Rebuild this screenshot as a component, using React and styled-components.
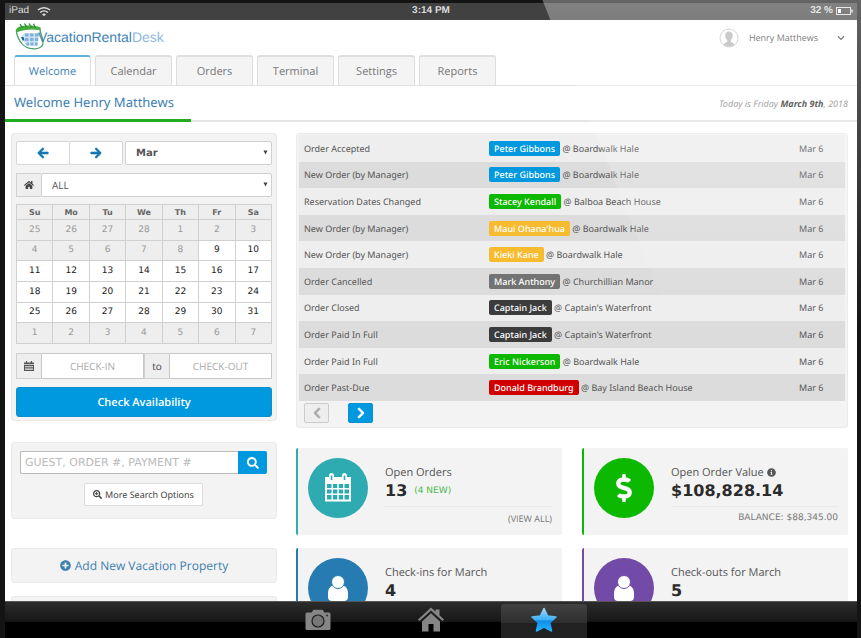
import React from "react";
import styled, { createGlobalStyle } from "styled-components";
import {
  FaArrowLeft,
  FaArrowRight,
  FaChevronDown,
  FaChevronLeft,
  FaChevronRight,
  FaDollarSign,
  FaHome,
  FaInfoCircle,
  FaPlusCircle,
  FaSearch,
  FaSearchPlus,
} from "react-icons/fa";

const tabs = ["Welcome", "Calendar", "Orders", "Terminal", "Settings", "Reports"];

const weekdays = ["Su", "Mo", "Tu", "We", "Th", "Fr", "Sa"];

const weeks = [
  [25, 26, 27, 28, 1, 2, 3],
  [4, 5, 6, 7, 8, 9, 10],
  [11, 12, 13, 14, 15, 16, 17],
  [18, 19, 20, 21, 22, 23, 24],
  [25, 26, 27, 28, 29, 30, 31],
  [1, 2, 3, 4, 5, 6, 7],
];

const blue = "#0099e0";
const green = "#0db800";

const activity = [
  { event: "Order Accepted", guest: "Peter Gibbons", color: blue, place: "Boardwalk Hale" },
  { event: "New Order (by Manager)", guest: "Peter Gibbons", color: blue, place: "Boardwalk Hale" },
  { event: "Reservation Dates Changed", guest: "Stacey Kendall", color: green, place: "Balboa Beach House" },
  { event: "New Order (by Manager)", guest: "Maui Ohana'hua", color: "#f6bb2e", place: "Boardwalk Hale" },
  { event: "New Order (by Manager)", guest: "Kieki Kane", color: "#f6bb2e", place: "Boardwalk Hale" },
  { event: "Order Cancelled", guest: "Mark Anthony", color: "#737373", place: "Churchillian Manor" },
  { event: "Order Closed", guest: "Captain Jack", color: "#3c3c3c", place: "Captain's Waterfront" },
  { event: "Order Paid In Full", guest: "Captain Jack", color: "#3c3c3c", place: "Captain's Waterfront" },
  { event: "Order Paid In Full", guest: "Eric Nickerson", color: green, place: "Boardwalk Hale" },
  { event: "Order Past-Due", guest: "Donald Brandburg", color: "#d00000", place: "Bay Island Beach House" },
];

// today is the 9th, so everything before it is closed
function isOpen(week, day) {
  if (week === 0 || week === 5) return false;
  return week > 1 || day >= 9;
}

export default function App() {
  return (
    <>
      <GlobalStyle />
      <Device>
        <StatusBar />
        <Screen>
          <Header />
          <TitleBar>
            <Title>Welcome Henry Matthews</Title>
            <Today>
              Today is Friday <b>March 9th</b>, 2018
            </Today>
          </TitleBar>
          <Content>
            <Sidebar>
              <Availability />
              <SearchPanel />
              <AddPanel>
                <AddLink href="#add">
                  <FaPlusCircle size={11} /> Add New Vacation Property
                </AddLink>
              </AddPanel>
              <Panel />
            </Sidebar>
            <Main>
              <Activity />
              <Cards />
            </Main>
          </Content>
        </Screen>
        <Dock />
        <Glare />
      </Device>
    </>
  );
}

function StatusBar() {
  return (
    <Status>
      <StatusSide>
        iPad
        <svg width="14" height="11" viewBox="0 0 14 11" fill="none" stroke="#ddd" strokeWidth="1.6">
          <path d="M1 4C4.400.9 9.600.9 13 4" />
          <path d="M3.200 6.500C5.400 4.500 8.600 4.500 10.800 6.500" />
          <path d="M5 8.200C6.200 7.200 7.800 7.200 9 8.200L7 10.300Z" fill="#ddd" stroke="none" />
        </svg>
      </StatusSide>
      <Clock>3:14 PM</Clock>
      <StatusSide $end>
        32 %
        <svg width="17" height="8" viewBox="0 0 17 8" fill="none" stroke="#ddd">
          <rect x=".5" y=".5" width="14" height="7" />
          <rect x="2" y="2" width="3" height="4" fill="#fff" stroke="none" />
          <path d="M16 2.500V5.500" strokeWidth="1.500" />
        </svg>
      </StatusSide>
    </Status>
  );
}

function Logo() {
  return (
    <LogoLink href="#home">
      <svg width="30" height="28" viewBox="0 0 30 28">
        <path
          d="M1.500 7C8 5 19 5 25 6C24.500 10 28.500 14 28 20C27.600 24 25 25.500 20 25.800C14 26 8.500 23.500 5.500 19C3 15 1.200 12 1.500 7Z"
          fill="#fff"
          stroke="#46a36a"
          strokeWidth="1.300"
        />
        <path d="M1 9.500C.5 5.500 3 3.500 7 3C13 2.200 20 2.500 25.500 4.500L25.500 7C17 5.800 8 6.500 1 9.500Z" fill="#43ac3c" />
        <path d="M5 1L7.500 5M9.500 .5L12 4.500M14 .5L16.500 4.500M18.500 .8L20.500 4.800" stroke="#2c8a35" strokeWidth="1.300" />
        <path d="M6.500 13L9.500 10H25L22 23.500L11 22.500Z" fill="#cfe2f2" />
        <path
          d="M10 10.500H13.500V13.500H10ZM15 10.500H18.500V13.500H15ZM20 10.500H23.500V13.500H20ZM10 15H13.500V18H10ZM15 15H18.500V18H15ZM20 15H23V18H20ZM11.500 19.500H14V22.500H11.500ZM15.500 19.500H18.500V22.500H15.500ZM20 19.500H22.500V22.500H20Z"
          fill="#7fb0dc"
        />
        <path d="M6 14H8.500L9.500 17.500H7.500Z" fill="#1f5f9e" />
      </svg>
      <LogoText>
        VacationRental<span>Desk</span>
      </LogoText>
    </LogoLink>
  );
}

function Header() {
  return (
    <TopBar>
      <Brand>
        <Logo />
        <UserMenu type="button">
          <svg width="20" height="20" viewBox="0 0 20 20">
            <circle cx="10" cy="10" r="9" fill="#fff" stroke="#c4c4c4" />
            <path
              d="M10 3.500C12.300 3.500 13.800 5.200 13.800 7.600C13.800 9.700 12.800 11.300 11.800 12V14C13.200 14.800 15 15.200 15.600 16.500A8.500 8.500 0 0 1 4.400 16.500C5 15.200 6.800 14.800 8.200 14V12C7.200 11.300 6.200 9.700 6.200 7.600C6.200 5.200 7.700 3.500 10 3.500Z"
              fill="#b4b4b4"
            />
          </svg>
          <UserName>Henry Matthews</UserName>
          <FaChevronDown size={8} />
        </UserMenu>
      </Brand>
      <Tabs>
        {tabs.map((tab, i) => (
          <Tab key={tab} href={`#${tab}`} $active={i === 0}>
            {tab}
          </Tab>
        ))}
      </Tabs>
    </TopBar>
  );
}

function Availability() {
  return (
    <Panel>
      <ControlRow>
        <ArrowGroup>
          <ArrowButton type="button" aria-label="Previous month">
            <FaArrowLeft size={12} />
          </ArrowButton>
          <ArrowButton type="button" aria-label="Next month">
            <FaArrowRight size={12} />
          </ArrowButton>
        </ArrowGroup>
        <SelectBox>
          <Select aria-label="Month" $bold>
            <option>Mar</option>
          </Select>
          <Caret />
        </SelectBox>
      </ControlRow>
      <InputGroup>
        <Addon htmlFor="property">
          <FaHome size={10} />
        </Addon>
        <SelectBox>
          <Select id="property" aria-label="Property">
            <option>ALL</option>
          </Select>
          <Caret />
        </SelectBox>
      </InputGroup>
      <Calendar>
        <thead>
          <tr>
            {weekdays.map((day) => (
              <th key={day}>{day}</th>
            ))}
          </tr>
        </thead>
        <tbody>
          {weeks.map((week, i) => (
            <tr key={i}>
              {week.map((day) => (
                <Day key={day} $open={isOpen(i, day)}>
                  {day}
                </Day>
              ))}
            </tr>
          ))}
        </tbody>
      </Calendar>
      <InputGroup>
        <Addon htmlFor="checkin">
          <svg width="10" height="10" viewBox="0 0 10 10" fill="#555">
            <path d="M0 1.500H2V0H3.200V1.500H6.800V0H8V1.500H10V3H0ZM0 3.800H10V10H0ZM1 5V5.800H9V5ZM1 6.700V7.500H9V6.700ZM1 8.300V9.100H9V8.300Z" fillRule="evenodd" />
          </svg>
        </Addon>
        <DateInput id="checkin" aria-label="Check-in" placeholder="CHECK-IN" />
        <Addon htmlFor="checkout">to</Addon>
        <DateInput id="checkout" placeholder="CHECK-OUT" />
      </InputGroup>
      <CheckButton type="button">Check Availability</CheckButton>
    </Panel>
  );
}

function Caret() {
  return (
    <CaretIcon width="5" height="5" viewBox="0 0 5 5">
      <path d="M.5 .5H4.500L2.500 4.500Z" fill="#444" />
    </CaretIcon>
  );
}

function SearchPanel() {
  return (
    <SearchBox>
      <SearchRow>
        <SearchInput aria-label="Search" placeholder="GUEST, ORDER #, PAYMENT #" />
        <SearchButton type="button" aria-label="Search">
          <FaSearch size={12} />
        </SearchButton>
      </SearchRow>
      <MoreButton type="button">
        <FaSearchPlus size={9} /> More Search Options
      </MoreButton>
    </SearchBox>
  );
}

function Activity() {
  return (
    <ActivityPanel>
      <ActivityTable>
        <tbody>
          {activity.map((row, i) => (
            <tr key={i}>
              <EventCell>{row.event}</EventCell>
              <td>
                <Badge $color={row.color}>{row.guest}</Badge> @ {row.place}
              </td>
              <DateCell>Mar 6</DateCell>
            </tr>
          ))}
        </tbody>
      </ActivityTable>
      <Pager>
        <PageButton type="button" aria-label="Previous page" disabled>
          <FaChevronLeft size={12} />
        </PageButton>
        <PageButton type="button" aria-label="Next page">
          <FaChevronRight size={12} />
        </PageButton>
      </Pager>
    </ActivityPanel>
  );
}

function CalendarIcon() {
  return (
    <svg width="28" height="30" viewBox="0 0 28 30">
      <path
        d="M1 4H5V2.500a2.500 2.500 0 0 1 5 0V4H18V2.500a2.500 2.500 0 0 1 5 0V4H27V28.500H1Z"
        fill="#fff"
      />
      <path d="M6.700 2.500H8.300V7H6.700ZM19.700 2.500H21.300V7H19.700Z" fill="#2dabb1" />
      <path
        d="M3 11H7.500V15H3ZM9 11H13.300V15H9ZM14.800 11H19V15H14.800ZM20.500 11H25V15H20.500ZM3 16.500H7.500V20.500H3ZM9 16.500H13.300V20.500H9ZM14.800 16.500H19V20.500H14.800ZM20.500 16.500H25V20.500H20.500ZM3 22H7.500V26.500H3ZM9 22H13.300V26.500H9ZM14.800 22H19V26.500H14.800ZM20.500 22H25V26.500H20.500Z"
        fill="#2dabb1"
      />
    </svg>
  );
}

function PersonIcon({ line }) {
  return (
    <svg width="22" height="26" viewBox="0 0 22 26" fill="#fff">
      <path d="M6 10.500H16C19.500 11.500 21 14.500 21 19V22C21 24.500 19.500 26 17 26H5C2.500 26 1 24.500 1 22V19C1 14.500 2.500 11.500 6 10.500Z" />
      <circle cx="11" cy="7" r="6.500" stroke={line} strokeWidth="1" />
    </svg>
  );
}

function Cards() {
  return (
    <CardGrid>
      <Card $color="#2dabb1">
        <Circle $color="#2dabb1">
          <CalendarIcon />
        </Circle>
        <CardBody>
          <CardLabel>Open Orders</CardLabel>
          <CardValue>
            13 <New>(4 NEW)</New>
          </CardValue>
          <CardFoot>
            <a href="#orders">(VIEW ALL)</a>
          </CardFoot>
        </CardBody>
      </Card>
      <Card $color="#0db800">
        <Circle $color="#0db800">
          <FaDollarSign size={28} />
        </Circle>
        <CardBody>
          <CardLabel>
            Open Order Value <FaInfoCircle size={9} />
          </CardLabel>
          <CardValue>$108,828.14</CardValue>
          <CardFoot $wide>BALANCE: $88,345.00</CardFoot>
        </CardBody>
      </Card>
      <Card $color="#267cb2">
        <Circle $color="#267cb2">
          <PersonIcon line="#267cb2" />
        </Circle>
        <CardBody>
          <CardLabel>Check-ins for March</CardLabel>
          <CardValue>4</CardValue>
          <CardFoot />
        </CardBody>
      </Card>
      <Card $color="#724aa8">
        <Circle $color="#724aa8">
          <PersonIcon line="#724aa8" />
        </Circle>
        <CardBody>
          <CardLabel>Check-outs for March</CardLabel>
          <CardValue>5</CardValue>
          <CardFoot />
        </CardBody>
      </Card>
    </CardGrid>
  );
}

function Dock() {
  return (
    <DockBar>
      <DockButton type="button" aria-label="Camera">
        <svg width="26" height="22" viewBox="0 0 26 22">
          <path
            d="M2 3.500H6.500L8.500 .8H17.500L19.500 3.500H24A1.500 1.500 0 0 1 25.500 5V19.500A1.500 1.500 0 0 1 24 21H2A1.500 1.500 0 0 1 .5 19.500V5A1.500 1.500 0 0 1 2 3.500Z"
            fill="#858585"
          />
          <circle cx="13" cy="12" r="6" fill="#777" stroke="#1c1c1c" strokeWidth="1.200" />
          <circle cx="22" cy="6.500" r="1" fill="#333" />
        </svg>
      </DockButton>
      <DockButton type="button" aria-label="Home">
        <svg width="26" height="26" viewBox="0 0 26 26" fill="#858585">
          <path d="M0 12.500L13 .5L17.500 4.600V2.500H21.500V8.200L26 12.500L24.500 14L13 3.600L1.500 14Z" />
          <path d="M4 14.500L13 6.200L22 14.500V24.500H15.500V17H10.500V24.500H4Z" />
        </svg>
      </DockButton>
      <DockButton type="button" aria-label="Favorites" $active>
        <svg width="28" height="26" viewBox="0 0 28 26">
          <defs>
            <linearGradient id="star" x1="0" y1="0" x2="0" y2="1">
              <stop offset="0" stopColor="#9ad8fb" />
              <stop offset=".5" stopColor="#3fb0f5" />
              <stop offset=".55" stopColor="#0f8eea" />
              <stop offset="1" stopColor="#24b4ff" />
            </linearGradient>
          </defs>
          <path
            d="M14 1.500L17.700 9L26 10L19.800 15.800L21.500 24L14 20L6.500 24L8.200 15.800L2 10L10.300 9Z"
            fill="url(#star)"
            stroke="url(#star)"
            strokeWidth="1.500"
            strokeLinejoin="round"
          />
        </svg>
      </DockButton>
    </DockBar>
  );
}

const GlobalStyle = createGlobalStyle`
  * {
    box-sizing: border-box;
  }

  body {
    margin: 0;
    background: #000;
    font-family: "Open Sans", sans-serif;
    font-size: 10px;
    color: #555;
    text-rendering: geometricPrecision;
  }

  button, input, select {
    margin: 0;
    font-family: inherit;
    border-radius: 0;
    text-rendering: inherit;
  }

  a {
    color: inherit;
    text-decoration: none;
  }

  svg {
    flex-shrink: 0;
  }
`;

const Device = styled.div`
  position: relative;
  display: flex;
  flex-direction: column;
  height: 100vh;
  padding: 3px 4px 0 5px;
  background: #141414;
  overflow: hidden;
`;

/* light falling over the glass from the top right */
const Glare = styled.div`
  position: absolute;
  top: 0;
  right: 0;
  bottom: 0;
  left: 63%;
  background: linear-gradient(to bottom, rgba(255, 255, 255, 0.34), rgba(255, 255, 255, 0) 52%);
  clip-path: polygon(0 0, 100% 0, 100% 100%, 80% 100%);
  pointer-events: none;
`;

const Status = styled.div`
  display: grid;
  grid-template-columns: 1fr auto 1fr;
  align-items: center;
  height: 17px;
  padding: 0 4px 1px;
  background: #414141;
  color: #ddd;
  font-family: "Liberation Sans", Arial, sans-serif;
  font-size: 10px;
  line-height: 14px;
`;

const StatusSide = styled.div`
  display: flex;
  align-items: center;
  justify-content: ${(props) => (props.$end ? "flex-end" : "flex-start")};
  gap: ${(props) => (props.$end ? "3px" : "8px")};
  font-weight: ${(props) => (props.$end ? "bold" : "normal")};
`;

const Clock = styled.div`
  font-weight: bold;
`;

const Screen = styled.div`
  flex: 1;
  min-height: 0;
  overflow: hidden;
  background: #fff;
`;

const TopBar = styled.header`
  border-bottom: 1px solid #e2e2e2;
`;

const Brand = styled.div`
  display: flex;
  align-items: center;
  justify-content: space-between;
  height: 35px;
  padding: 0 12px 0 10px;
`;

const LogoLink = styled.a`
  display: flex;
  align-items: center;
  padding-bottom: 2px;
`;

const LogoText = styled.span`
  margin-left: -7px;
  font-family: "Liberation Sans", Arial, sans-serif;
  font-size: 14px;
  line-height: 16px;
  color: #3d83b8;

  span {
    color: #8fb9dd;
  }
`;

const UserMenu = styled.button`
  display: flex;
  align-items: center;
  padding: 0;
  border: 0;
  background: none;
  color: #444;
`;

const UserName = styled.span`
  margin: 0 19px 0 10px;
  font-size: 9px;
  color: #444;
`;

const Tabs = styled.nav`
  display: flex;
  gap: 4px;
  padding: 0 9px;
`;

const Tab = styled.a`
  width: 77px;
  height: 30px;
  border: 1px solid #dedede;
  border-top: 2px solid ${(props) => (props.$active ? "#5fb0dc" : "#dedede")};
  border-bottom: 0;
  border-radius: 3px 3px 0 0;
  margin-bottom: ${(props) => (props.$active ? "-1px" : "0")};
  padding-bottom: ${(props) => (props.$active ? "1px" : "0")};
  background: ${(props) => (props.$active ? "#fff" : "#f4f4f4")};
  color: ${(props) => (props.$active ? "#3d80b3" : "#777")};
  font-size: 11px;
  line-height: 30px;
  text-align: center;
`;

const TitleBar = styled.div`
  display: flex;
  align-items: center;
  justify-content: space-between;
  height: 36px;
  padding-right: 9px;
  border-bottom: 2px solid #e4e4e6;
`;

const Title = styled.h1`
  align-self: stretch;
  min-width: 186px;
  margin: 0 0 -2px;
  padding-left: 9px;
  border-bottom: 3px solid #1fad1f;
  font-family: "Noto Sans", sans-serif;
  font-size: 13px;
  font-weight: 400;
  line-height: 33px;
  color: #3d80b3;
`;

const Today = styled.div`
  font-family: "Noto Sans", sans-serif;
  font-size: 9px;
  font-style: italic;
  color: #888;

  b {
    color: #333;
  }
`;

const Content = styled.div`
  display: grid;
  grid-template-columns: 266px minmax(0, 1fr);
  gap: 19px;
  padding: 11px 9px 0 6px;
`;

const Sidebar = styled.aside`
  display: flex;
  flex-direction: column;
`;

const Main = styled.main`
  display: flex;
  flex-direction: column;
  gap: 20px;
`;

const Panel = styled.section`
  padding: 7px 4px 3px;
  border: 1px solid #ebebeb;
  border-radius: 3px;
  background: #f3f3f3;
`;

const ControlRow = styled.div`
  display: flex;
  gap: 2px;
  margin-bottom: 8px;
`;

const ArrowGroup = styled.div`
  display: flex;
`;

const ArrowButton = styled.button`
  display: flex;
  align-items: center;
  justify-content: center;
  width: 54px;
  height: 24px;
  border: 1px solid #d6d6d6;
  border-radius: 2px;
  background: #fff;
  color: #1778b0;

  & + & {
    margin-left: -1px;
  }

  svg {
    stroke: currentColor;
    stroke-width: 30px;
  }
`;

const SelectBox = styled.div`
  position: relative;
  flex: 1;
`;

const CaretIcon = styled.svg`
  position: absolute;
  top: 9px;
  right: 4px;
  pointer-events: none;
`;

const Select = styled.select`
  appearance: none;
  width: 100%;
  height: 24px;
  padding: 0 10px;
  border: 1px solid #d0d0d0;
  border-radius: 2px;
  background: #fff;
  color: #555;
  font-family: ${(props) => (props.$bold ? '"DejaVu Sans", Verdana, sans-serif' : "inherit")};
  font-size: 10px;
  font-weight: ${(props) => (props.$bold ? "bold" : "normal")};
`;

const InputGroup = styled.div`
  display: flex;
`;

const Addon = styled.label`
  display: flex;
  align-items: center;
  justify-content: center;
  width: 25px;
  border: 1px solid #d0d0d0;
  border-right: 0;
  background: #eee;
  color: #444;
`;

const Calendar = styled.table`
  width: 100%;
  height: 140px;
  margin: 7px 0 9px;
  border-collapse: collapse;
  table-layout: fixed;
  font-family: "DejaVu Sans", Verdana, sans-serif;
  font-size: 9px;
  text-align: center;

  th {
    height: 15px;
    padding: 0;
    border: 1px solid #d0d0d0;
    background: #eee;
    color: #666;
    font-size: 8px;
  }
`;

const Day = styled.td`
  height: 20px;
  padding: 0;
  border: 1px solid #d0d0d0;
  background: ${(props) => (props.$open ? "#fff" : "#eee")};
  color: ${(props) => (props.$open ? "#222" : "#999")};
`;

const DateInput = styled.input`
  flex: 1;
  min-width: 0;
  width: 0;
  height: 26px;
  padding: 0 6px;
  border: 1px solid #c8c8c8;
  background: #fff;
  font-size: 10px;
  text-align: center;

  &::placeholder {
    color: #aaa;
  }
`;

const CheckButton = styled.button`
  width: 100%;
  height: 30px;
  margin-top: 8px;
  border: 1px solid #0c8fce;
  border-radius: 3px;
  background: #0099e0;
  color: #fff;
  font-size: 11px;
  font-weight: 600;
`;

const SearchBox = styled(Panel)`
  display: flex;
  flex-direction: column;
  align-items: center;
  margin: 21px 0 29px;
  padding: 8px 9px 12px 8px;
`;

const SearchRow = styled.div`
  display: flex;
  width: 100%;
`;

const SearchInput = styled.input`
  flex: 1;
  min-width: 0;
  height: 23px;
  padding: 0 4px;
  border: 1px solid #bbb;
  border-right: 0;
  border-radius: 2px 0 0 2px;
  font-family: "DejaVu Sans", Verdana, sans-serif;
  font-size: 11px;

  &::placeholder {
    color: #bbb;
  }
`;

const SearchButton = styled.button`
  display: flex;
  align-items: center;
  justify-content: center;
  width: 29px;
  border: 0;
  border-radius: 0 2px 2px 0;
  background: #0099e0;
  color: #fff;
`;

const MoreButton = styled.button`
  display: flex;
  align-items: center;
  gap: 3px;
  height: 23px;
  margin-top: 9px;
  padding: 0 8px;
  border: 1px solid #dcdcdc;
  border-radius: 2px;
  background: #fff;
  color: #444;
  font-family: "Noto Sans", sans-serif;
  font-size: 9px;
`;

const AddPanel = styled(Panel)`
  margin-bottom: 13px;
  padding: 6px;
  text-align: center;
`;

const AddLink = styled.a`
  display: flex;
  align-items: center;
  justify-content: center;
  gap: 4px;
  color: #3d7fae;
  font-size: 12px;
  line-height: 21px;
`;

const ActivityPanel = styled(Panel)`
  padding: 1px 2px 4px;
`;

const ActivityTable = styled.table`
  width: 100%;
  height: 266px;
  border-collapse: collapse;
  table-layout: fixed;
  font-family: "Noto Sans", sans-serif;
  font-size: 9px;

  td {
    height: 26px;
    padding: 0;
    white-space: nowrap;
  }

  tr:nth-child(odd) {
    background: #eee;
  }

  tr:nth-child(even) {
    background: #dcdcdc;
  }
`;

const EventCell = styled.td`
  width: 190px;

  ${ActivityTable} & {
    padding-left: 5px;
  }
`;

const DateCell = styled.td`
  width: 46px;
`;

const Badge = styled.span`
  display: inline-block;
  height: 15px;
  padding: 0 5px;
  border-radius: 2px;
  background: ${(props) => props.$color};
  color: #fff;
  font-weight: 500;
  line-height: 15px;
`;

const Pager = styled.div`
  display: flex;
  gap: 19px;
  padding: 2px 5px 0;
`;

const PageButton = styled.button`
  display: flex;
  align-items: center;
  justify-content: center;
  width: 25px;
  height: 20px;
  border: 1px solid ${(props) => (props.disabled ? "#ccc" : "#0c8fce")};
  border-radius: 2px;
  background: ${(props) => (props.disabled ? "#eee" : "#0099e0")};
  color: ${(props) => (props.disabled ? "#aaa" : "#fff")};

  svg {
    stroke: currentColor;
    stroke-width: 30px;
  }
`;

const CardGrid = styled.div`
  display: grid;
  grid-template-columns: 1fr 1fr;
  gap: 13px 20px;
`;

const Card = styled.section`
  display: flex;
  gap: 17px;
  padding: 10px 10px 8px;
  border-left: 2px solid ${(props) => props.$color};
  border-radius: 2px;
  background: #f3f3f3;
`;

const Circle = styled.div`
  display: flex;
  align-items: center;
  justify-content: center;
  flex-shrink: 0;
  width: 60px;
  height: 60px;
  border-radius: 50%;
  background: ${(props) => props.$color};
  color: #fff;
`;

const CardBody = styled.div`
  flex: 1;
  padding-top: 7px;
`;

const CardLabel = styled.div`
  height: 15px;
  font-size: 11px;
  line-height: 15px;
  color: #555;

  svg {
    vertical-align: -1px;
  }
`;

const CardValue = styled.div`
  display: flex;
  align-items: center;
  gap: 7px;
  height: 22px;
  font-family: "DejaVu Sans", Verdana, sans-serif;
  font-size: 16px;
  font-weight: bold;
  line-height: 20px;
  color: #2b2b2b;
`;

const New = styled.span`
  font-size: 9px;
  font-weight: normal;
  color: #4cb84c;
`;

const CardFoot = styled.div`
  height: 21px;
  margin-top: 4px;
  border-top: 1px solid #eaeaea;
  font-family: ${(props) => (props.$wide ? '"DejaVu Sans", Verdana, sans-serif' : "inherit")};
  font-size: 9px;
  line-height: 23px;
  text-align: right;
  color: #777;
`;

const DockBar = styled.nav`
  display: flex;
  justify-content: center;
  gap: 27px;
  height: 37px;
  padding-top: 2px;
  border-top: 1px solid #555;
  background: linear-gradient(#2c2c2c, #161616 20px, #000 20px);
`;

const DockButton = styled.button`
  display: flex;
  align-items: center;
  justify-content: center;
  width: 86px;
  padding: 0 0 2px;
  border: 0;
  border-radius: 3px 3px 0 0;
  background: ${(props) => (props.$active ? "linear-gradient(#424242, #2e2e2e 19px, #222 19px)" : "none")};
`;
